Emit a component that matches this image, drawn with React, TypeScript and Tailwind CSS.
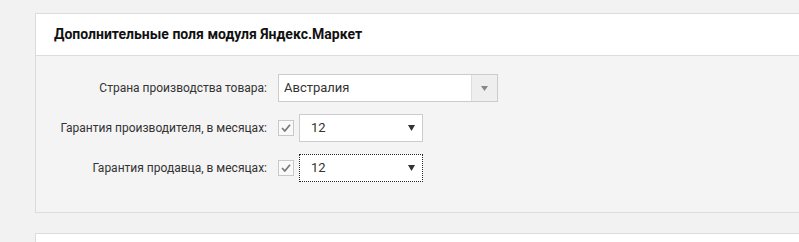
const font = { fontFamily: "Roboto, 'Liberation Sans', sans-serif" };

function Label({ children }: { children: React.ReactNode }) {
  return (
    <div className="w-[231px] text-right text-[12px] text-[#333]">
      {children}
    </div>
  );
}

function Check() {
  return (
    <div className="flex h-[16px] w-[16px] items-center justify-center border border-[#c8c8c8] bg-[#f9f9f9]">
      <svg width="12" height="12" viewBox="0 0 12 12">
        <path d="M2 6 L4.8 9 L10 2.8" fill="none" stroke="#777" strokeWidth="1.7" />
      </svg>
    </div>
  );
}

function SmallSelect({ focused = false }: { focused?: boolean }) {
  return (
    <div
      className={
        focused
          ? "flex h-[28px] w-[124px] items-center justify-between border border-dotted border-[#222] bg-white pl-[11px] pr-[7px]"
          : "flex h-[28px] w-[124px] items-center justify-between border border-[#ccc] bg-white pl-[11px] pr-[7px]"
      }
    >
      <span className="text-[13px] text-[#333]">12</span>
      <svg width="7" height="6" viewBox="0 0 7 6">
        <path d="M0 0 H7 L3.5 6 Z" fill="#333" />
      </svg>
    </div>
  );
}

export default function App() {
  return (
    <div className="h-[242px] w-[799px] overflow-hidden bg-[#f2f2f2] pl-[35px] pt-[13px]" style={font}>
      <div className="w-[780px] border border-[#dcdcdc]">
        <div className="flex h-[42px] items-center border-b border-[#dcdcdc] bg-white pl-[18px]">
          <h3 className="text-[14px] font-bold text-[#111]">
            Дополнительные поля модуля Яндекс.Маркет
          </h3>
        </div>
        <div className="flex flex-col gap-[12px] bg-[#f4f4f4] pb-[30px] pt-[18px]">
          <div className="flex items-center gap-[11px]">
            <Label>Страна производства товара:</Label>
            <div className="flex h-[28px] w-[220px] border border-[#ccc] bg-white">
              <div className="flex flex-1 items-center pl-[5px] text-[13px] text-[#333]">
                Австралия
              </div>
              <div className="flex w-[26px] items-center justify-center border-l border-[#ddd] bg-[#eee]">
                <svg width="7" height="5" viewBox="0 0 7 5">
                  <path d="M0 0 H7 L3.5 5 Z" fill="#888" />
                </svg>
              </div>
            </div>
          </div>
          <div className="flex items-center gap-[11px]">
            <Label>Гарантия производителя, в месяцах:</Label>
            <div className="flex items-center gap-[5px]">
              <Check />
              <SmallSelect />
            </div>
          </div>
          <div className="flex items-center gap-[11px]">
            <Label>Гарантия продавца, в месяцах:</Label>
            <div className="flex items-center gap-[5px]">
              <Check />
              <SmallSelect focused />
            </div>
          </div>
        </div>
      </div>
      <div className="mt-[20px] h-[20px] w-[780px] border border-[#dcdcdc] bg-white" />
    </div>
  );
}
